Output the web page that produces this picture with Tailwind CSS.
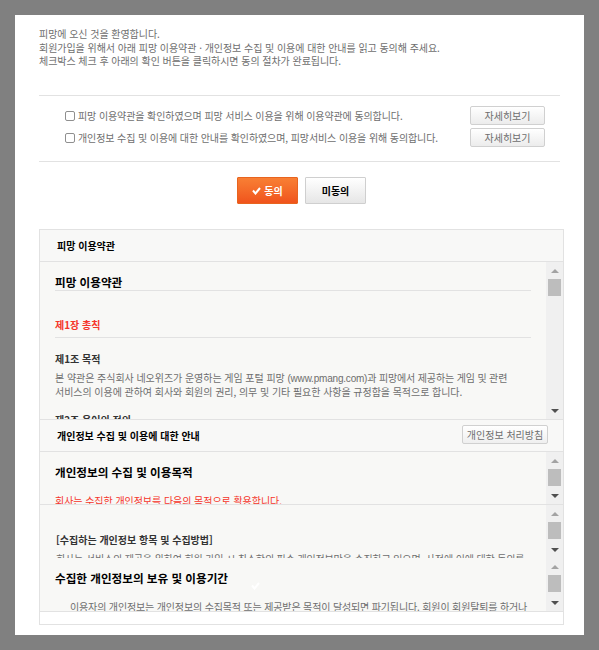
<!DOCTYPE html>
<html lang="ko">
<head>
  <meta charset="UTF-8" />
  <title>피망 이용약관</title>
  <script src="https://cdn.jsdelivr.net/npm/@tailwindcss/browser@4"></script>
</head>
<body class="bg-[#808080] h-[650px] overflow-hidden font-['Noto_Sans_CJK_KR','Noto_Sans',sans-serif] text-[10px] text-[#6e6e6e]">
  <div class="relative ml-[15px] mt-[15px] w-[569px] h-[620px] bg-white px-[24px] pt-[12px]">
    <!-- intro -->
    <div class="h-[68px] leading-[13.5px] tracking-[-0.05px]">
      <p>피망에 오신 것을 환영합니다.</p>
      <p>회원가입을 위해서 아래 피망 이용약관 · 개인정보 수집 및 이용에 대한 안내를 읽고 동의해 주세요.</p>
      <p>체크박스 체크 후 아래의 확인 버튼을 클릭하시면 동의 절차가 완료됩니다.</p>
    </div>

    <!-- agree rows -->
    <div class="h-[67px] border-y border-[#e2e2e2] pt-[10px] pl-[26px] pr-[15px] flex flex-col gap-[3px]">
      <div class="flex items-center h-[19px]">
        <span class="w-[10px] h-[10px] border border-[#8f8f8f] rounded-[2px] bg-white"></span>
        <span class="ml-[3px] flex-1 tracking-[-0.1px]">피망 이용약관을 확인하였으며 피망 서비스 이용을 위해 이용약관에 동의합니다.</span>
        <button class="w-[75px] h-[19px] border border-[#d0d0d0] rounded-[2px] bg-gradient-to-b from-white to-[#ececec] text-[#6e6e6e] text-[10px]">자세히보기</button>
      </div>
      <div class="flex items-center h-[19px]">
        <span class="w-[10px] h-[10px] border border-[#8f8f8f] rounded-[2px] bg-white"></span>
        <span class="ml-[3px] flex-1 tracking-[-0.1px]">개인정보 수집 및 이용에 대한 안내를 확인하였으며, 피망서비스 이용을 위해 동의합니다.</span>
        <button class="w-[75px] h-[19px] border border-[#d0d0d0] rounded-[2px] bg-gradient-to-b from-white to-[#ececec] text-[#6e6e6e] text-[10px]">자세히보기</button>
      </div>
    </div>

    <!-- buttons -->
    <div class="h-[67px] pt-[15px] pl-[4px] flex justify-center gap-[7px]">
      <button class="w-[61px] h-[27px] border border-[#e8641f] rounded-[1px] bg-gradient-to-b from-[#f87f34] to-[#f0531c] text-white text-[10px] font-bold flex items-center justify-center gap-[3px]">
        <svg width="9" height="8" viewBox="0 0 9 8"><path d="M1 3.5 L3.5 6.5 L8 1" fill="none" stroke="#fff" stroke-width="2"/></svg>
        동의
      </button>
      <button class="w-[61px] h-[27px] border border-[#cfcfcf] rounded-[1px] bg-gradient-to-b from-white to-[#e6e6e6] text-black text-[10px] font-bold">미동의</button>
    </div>

    <!-- terms panel -->
    <div class="w-[525px] h-[396px] border border-[#e2e2e2] bg-white">
      <div class="h-[32px] bg-[#f8f8f7] border-b border-[#e2e2e2] pl-[17px] flex items-center text-[10px] font-bold text-black">피망 이용약관</div>

      <div class="h-[158px] flex border-b border-[#e2e2e2] bg-[#f8f8f6]">
        <div class="flex-1 overflow-hidden pl-[15px] pr-[15px]">
          <h3 class="mt-[12px] h-[17px] border-b border-[#e2e2e2] text-[11.6px] leading-[17px] font-bold text-black">피망 이용약관</h3>
          <h4 class="mt-[26px] h-[21px] border-b border-[#e2e2e2] text-[10px] font-bold text-[#f5352a]">제1장 총칙</h4>
          <h5 class="mt-[13px] text-[10px] leading-[15px] font-bold text-[#333]">제1조 목적</h5>
          <p class="mt-[5px] leading-[13px] tracking-[-0.05px] whitespace-nowrap">본 약관은 주식회사 네오위즈가 운영하는 게임 포털 피망 <span class="font-['Liberation_Sans',sans-serif] tracking-[-0.2px]">(www.pmang.com)</span><span class="tracking-[-0.15px]">과 피망에서 제공하는 게임 및 관련</span><br>서비스의 이용에 관하여 회사와 회원의 권리, 의무 및 기타 필요한 사항을 규정함을 목적으로 합니다.</p>
          <h5 class="mt-[14px] text-[10px] leading-[15px] font-bold text-[#333]">제2조 용어의 정의</h5>
        </div>
        <div class="w-[17px] shrink-0 bg-[#f0f0f0] flex flex-col">
          <div class="h-[17px] flex items-center justify-center"><svg width="8" height="4"><polygon points="4,0 8,4 0,4" fill="#a3a3a3"/></svg></div>
          <div class="h-[17px] mx-[2px] bg-[#bdbdbd]"></div>
          <div class="mt-auto h-[17px] flex items-center justify-center"><svg width="8" height="4"><polygon points="0,0 8,0 4,4" fill="#505050"/></svg></div>
        </div>
      </div>

      <div class="h-[32px] bg-[#f8f8f7] border-b border-[#e2e2e2] pl-[17px] pr-[15px] flex items-center justify-between">
        <span class="text-[10px] font-bold text-black">개인정보 수집 및 이용에 대한 안내</span>
        <button class="w-[86px] h-[19px] -mt-[3px] border border-[#d0d0d0] rounded-[2px] bg-gradient-to-b from-white to-[#efefef] text-[#6e6e6e] text-[10px]">개인정보 처리방침</button>
      </div>

      <div class="h-[53px] flex border-b border-[#e2e2e2] bg-[#f8f8f6]">
        <div class="flex-1 overflow-hidden pl-[15px] pr-[15px]">
          <h3 class="mt-[12px] text-[11.6px] leading-[17px] font-bold text-black">개인정보의 수집 및 이용목적</h3>
          <p class="mt-[13px] leading-[13px] tracking-[-0.05px] text-[#f5352a]">회사는 수집한 개인정보를 다음의 목적으로 활용합니다.</p>
        </div>
        <div class="w-[17px] shrink-0 bg-[#f0f0f0] flex flex-col">
          <div class="h-[17px] flex items-center justify-center"><svg width="8" height="4"><polygon points="4,0 8,4 0,4" fill="#a3a3a3"/></svg></div>
          <div class="h-[17px] mx-[2px] bg-[#bdbdbd]"></div>
          <div class="mt-auto h-[17px] flex items-center justify-center"><svg width="8" height="4"><polygon points="0,0 8,0 4,4" fill="#505050"/></svg></div>
        </div>
      </div>

      <div class="h-[53px] flex bg-[#f8f8f6]">
        <div class="flex-1 overflow-hidden pl-[16px] pr-[15px]">
          <h5 class="mt-[27px] text-[10px] leading-[15px] font-bold text-[#333]">[수집하는 개인정보 항목 및 수집방법]</h5>
          <p class="mt-[5px] leading-[13px] tracking-[-0.14px] whitespace-nowrap">회사는 서비스의 제공을 위하여 회원 가입 시 최소한의 필수 개인정보만을 수집하고 있으며, 사전에 이에 대한 동의를</p>
        </div>
        <div class="w-[17px] shrink-0 bg-[#f0f0f0] flex flex-col">
          <div class="h-[17px] flex items-center justify-center"><svg width="8" height="4"><polygon points="4,0 8,4 0,4" fill="#a3a3a3"/></svg></div>
          <div class="h-[17px] mx-[2px] bg-[#bdbdbd]"></div>
          <div class="mt-auto h-[17px] flex items-center justify-center"><svg width="8" height="4"><polygon points="0,0 8,0 4,4" fill="#505050"/></svg></div>
        </div>
      </div>

      <div class="h-[54px] flex border-b border-[#e2e2e2] bg-[#f8f8f6]">
        <div class="flex-1 overflow-hidden pl-[15px]">
          <h3 class="mt-[12px] text-[11.6px] leading-[17px] font-bold text-black">수집한 개인정보의 보유 및 이용기간</h3>
          <p class="mt-[13px] pl-[15px] leading-[13px] tracking-[-0.15px] whitespace-nowrap">이용자의 개인정보는 개인정보의 수집목적 또는 제공받은 목적이 달성되면 파기됩니다. 회원이 회원탈퇴를 하거나</p>
        </div>
        <div class="w-[17px] shrink-0 bg-[#f0f0f0] flex flex-col">
          <div class="h-[17px] flex items-center justify-center"><svg width="8" height="4"><polygon points="4,0 8,4 0,4" fill="#a3a3a3"/></svg></div>
          <div class="h-[17px] mx-[2px] bg-[#bdbdbd]"></div>
          <div class="mt-auto h-[17px] flex items-center justify-center"><svg width="8" height="4"><polygon points="0,0 8,0 4,4" fill="#505050"/></svg></div>
        </div>
      </div>
    </div>

    <svg class="absolute left-[236px] top-[567px]" width="9" height="8" viewBox="0 0 9 8"><path d="M1 3.5 L3.5 6.5 L8 1" fill="none" stroke="#fff" stroke-width="2"/></svg>
  </div>
</body>
</html>
